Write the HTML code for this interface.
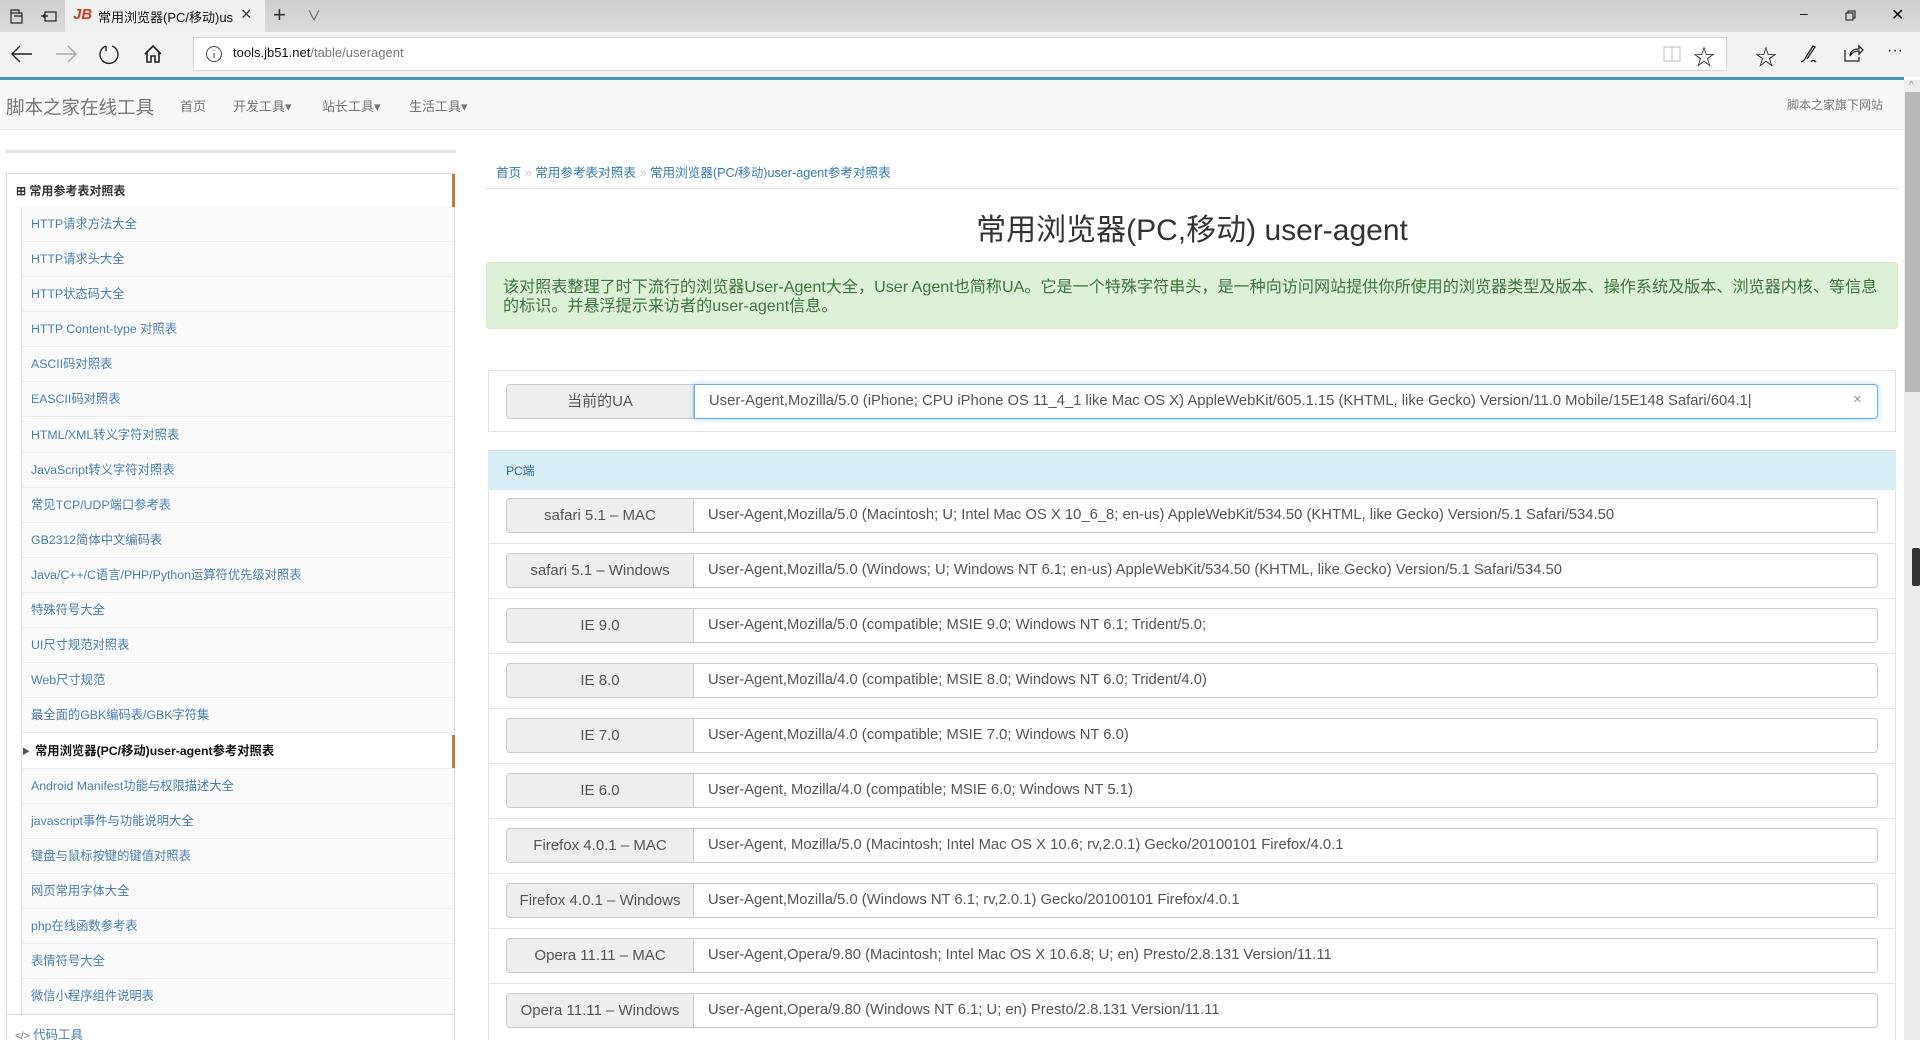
<!DOCTYPE html>
<html><head><meta charset="utf-8">
<style>
*{box-sizing:border-box;margin:0;padding:0}
html,body{width:1920px;height:1040px;overflow:hidden}
body{background:#fff;font-family:"Liberation Sans","Noto Sans CJK SC",sans-serif;position:relative;color:#333}
.a{position:absolute}
.tabbar{left:0;top:0;width:1920px;height:32px;background:linear-gradient(#cfcfcf,#dadada)}
.tab{left:65px;top:0;width:200px;height:32px;background:#f0f0f0}
.addr{left:0;top:32px;width:1920px;height:45px;background:#f2f2f2}
.abox{left:193px;top:37px;width:1534px;height:34px;background:#fff;border:1px solid #d6d6d6}
.blue{left:0;top:77px;width:1904px;height:3px;background:#4a93ba}
.hdr{left:0;top:80px;width:1904px;height:50px;background:#f8f8f8;border-bottom:1px solid #e7e7e7}
.nav{font-size:13px;color:#777;top:96px}
.sb{left:1904px;top:80px;width:16px;height:960px;background:#ececec}
.side-item{position:absolute;left:22px;width:432px;height:35px;background:#fafafa;border-bottom:1px solid #efefef;font-size:12.3px;color:#4a7fb5;padding-left:9px;line-height:35px;white-space:nowrap}
.bc{font-size:12.6px;color:#337ab7;top:162px}
.row{position:absolute;left:506px;width:1372px;height:35px}
.lab{position:absolute;left:0;top:0;width:188px;height:35px;background:#eee;border:1px solid #ccc;border-radius:4px 0 0 4px;text-align:center;line-height:33px;font-size:15px;color:#555}
.val{position:absolute;left:188px;top:0;width:1184px;height:35px;background:#fff;border:1px solid #ccc;border-left:none;border-radius:0 4px 4px 0;line-height:33px;font-size:14.8px;color:#555;padding-left:14px;white-space:nowrap;overflow:hidden}
.sep{position:absolute;left:488px;width:1408px;height:1px;background:#e6e6e6}
</style></head><body>
<div class="a tabbar"></div>
<div class="a tab"></div>
<svg class="a" style="left:8px;top:7px" width="18" height="18" viewBox="0 0 18 18" fill="none" stroke="#222" stroke-width="1.2"><rect x="3" y="6" width="11" height="10"/><path d="M3 6V3h8v3M6 9h8"/></svg>
<svg class="a" style="left:40px;top:7px" width="18" height="18" viewBox="0 0 18 18" fill="none" stroke="#222" stroke-width="1.2"><rect x="5" y="5" width="11" height="9"/><path d="M1 9h7M5 7l-2 2 2 2"/></svg>
<div class="a" style="left:73px;top:6px;width:18px;height:18px;font:bold 15px 'Liberation Sans';color:#c8402a;font-style:italic">JB</div>
<div class="a" style="left:98px;top:7px;font-size:13px;color:#111;width:135px;overflow:hidden;white-space:nowrap">常用浏览器(PC/移动)user-agent</div>
<div class="a" style="left:241px;top:4px;font-size:18px;color:#333">×</div>
<div class="a" style="left:273px;top:2px;font-size:22px;color:#333">+</div>
<div class="a" style="left:307px;top:6px;font-size:14px;color:#555">∨</div>
<div class="a" style="left:1800px;top:5px;font-size:14px;color:#111">–</div>
<svg class="a" style="left:1845px;top:10px" width="11" height="11" viewBox="0 0 11 11" fill="none" stroke="#111"><rect x="1" y="3" width="7" height="7"/><path d="M3 3V1h7v7H8"/></svg>
<div class="a" style="left:1891px;top:5px;font-size:16px;color:#111">✕</div>
<div class="a addr"></div>
<svg class="a" style="left:10px;top:44px" width="24" height="20" viewBox="0 0 24 20" fill="none" stroke="#222" stroke-width="1.4"><path d="M2 10h20M10 2 2 10l8 8"/></svg>
<svg class="a" style="left:54px;top:44px" width="24" height="20" viewBox="0 0 24 20" fill="none" stroke="#aaa" stroke-width="1.4"><path d="M2 10h20M14 2l8 8-8 8"/></svg>
<svg class="a" style="left:98px;top:42px" width="24" height="24" viewBox="0 0 24 24" fill="none" stroke="#222" stroke-width="1.4"><path d="M8 4a9 9 0 1 0 6 0"/><path d="M8 4v5"/></svg>
<svg class="a" style="left:142px;top:43px" width="22" height="22" viewBox="0 0 22 22" fill="none" stroke="#222" stroke-width="1.6"><path d="M3 11 11 3l8 8M5 9v10h4v-6h4v6h4V9"/></svg>
<div class="a abox"></div>
<svg class="a" style="left:205px;top:45px" width="18" height="18" viewBox="0 0 18 18" fill="none" stroke="#444"><circle cx="9" cy="9" r="7.5"/><path d="M9 8v5M9 5v1"/></svg>
<div class="a" style="left:233px;top:45px;font-size:13px;color:#111">tools.jb51.net<span style="color:#777">/table/useragent</span></div>
<svg class="a" style="left:1663px;top:45px" width="18" height="18" viewBox="0 0 18 18" fill="none" stroke="#bbb"><rect x="1" y="2" width="16" height="14"/><path d="M9 2v14"/></svg>
<div class="a" style="left:1693px;top:40px;font-size:22px;color:#222">☆</div>
<div class="a" style="left:1755px;top:40px;font-size:22px;color:#222">☆</div>
<svg class="a" style="left:1799px;top:44px" width="20" height="20" viewBox="0 0 20 20" fill="none" stroke="#222" stroke-width="1.3"><path d="M2 18c3-1 4-3 5-5L14 2l2 1-8 12M12 18c1-2 3-2 5 0"/></svg>
<svg class="a" style="left:1843px;top:43px" width="22" height="20" viewBox="0 0 22 20" fill="none" stroke="#222" stroke-width="1.3"><path d="M2 7v11h14v-4M7 13c0-5 4-7 9-7V3l4 4-4 4V8c-4 0-7 1-9 5z"/></svg>
<div class="a" style="left:1887px;top:42px;font-size:16px;color:#222">···</div>
<div class="a blue"></div>
<div class="a hdr"></div>
<div class="a" style="left:6px;top:94px;font-size:18.5px;color:#777">脚本之家在线工具</div>
<div class="a nav" style="left:180px">首页</div>
<div class="a nav" style="left:233px">开发工具▾</div>
<div class="a nav" style="left:322px">站长工具▾</div>
<div class="a nav" style="left:409px">生活工具▾</div>
<div class="a nav" style="left:1787px;font-size:12px">脚本之家旗下网站</div>
<div class="a sb"></div>
<div class="a" style="left:1905px;top:92px;width:15px;height:300px;background:#b9b9b9"></div>
<div class="a" style="left:1909px;top:80px;font-size:10px;color:#999">^</div>
<div class="a" style="left:1912px;top:548px;width:8px;height:38px;background:#333;border-radius:2px"></div>

<!-- sidebar -->
<div class="a" style="left:6px;top:150px;width:450px;height:3px;background:#e5e5e5"></div>
<div class="a" style="left:6px;top:173px;width:449px;height:867px;border:1px solid #ddd;border-bottom:none;background:#fff"></div>
<div class="a" style="left:452px;top:174px;width:3px;height:33px;background:#c77a3a"></div>
<div class="a" style="left:16px;top:182px;font-size:12px;color:#333;font-weight:bold">⊞ 常用参考表对照表</div>
<div class="a" style="left:21px;top:207px;width:1px;height:807px;background:#ddd"></div>
<div class="side-item" style="top:207px">HTTP请求方法大全</div>
<div class="side-item" style="top:242px">HTTP请求头大全</div>
<div class="side-item" style="top:277px">HTTP状态码大全</div>
<div class="side-item" style="top:312px">HTTP Content-type 对照表</div>
<div class="side-item" style="top:347px">ASCII码对照表</div>
<div class="side-item" style="top:382px">EASCII码对照表</div>
<div class="side-item" style="top:418px">HTML/XML转义字符对照表</div>
<div class="side-item" style="top:453px">JavaScript转义字符对照表</div>
<div class="side-item" style="top:488px">常见TCP/UDP端口参考表</div>
<div class="side-item" style="top:523px">GB2312简体中文编码表</div>
<div class="side-item" style="top:558px">Java/C++/C语言/PHP/Python运算符优先级对照表</div>
<div class="side-item" style="top:593px">特殊符号大全</div>
<div class="side-item" style="top:628px">UI尺寸规范对照表</div>
<div class="side-item" style="top:663px">Web尺寸规范</div>
<div class="side-item" style="top:698px">最全面的GBK编码表/GBK字符集</div>
<div class="side-item" style="top:734px;background:#fff;color:#111;font-weight:bold;padding-left:13px">常用浏览器(PC/移动)user-agent参考对照表</div>
<div class="a" style="left:22px;top:746px;font-size:8px;color:#555">▶</div>
<div class="a" style="left:452px;top:735px;width:3px;height:33px;background:#c77a3a"></div>
<div class="side-item" style="top:769px">Android Manifest功能与权限描述大全</div>
<div class="side-item" style="top:804px">javascript事件与功能说明大全</div>
<div class="side-item" style="top:839px">键盘与鼠标按键的键值对照表</div>
<div class="side-item" style="top:874px">网页常用字体大全</div>
<div class="side-item" style="top:909px">php在线函数参考表</div>
<div class="side-item" style="top:944px">表情符号大全</div>
<div class="side-item" style="top:979px">微信小程序组件说明表</div>
<div class="a" style="left:7px;top:1014px;width:447px;height:1px;background:#ddd"></div>
<div class="a" style="left:15px;top:1024px;font-size:12.5px;color:#4a7fb5"><span style="font-size:10px;color:#777">&lt;/&gt;</span> 代码工具</div>

<!-- main -->
<div class="a bc" style="left:496px">首页 <span style="color:#ccc">»</span> 常用参考表对照表 <span style="color:#ccc">»</span> 常用浏览器(PC/移动)user-agent参考对照表</div>
<div class="a" style="left:486px;top:188px;width:1412px;height:1px;background:#e5e5e5"></div>
<div class="a" style="left:486px;top:205px;width:1412px;text-align:center;font-size:30px;color:#333">常用浏览器(PC,移动) user-agent</div>
<div class="a" style="left:486px;top:262px;width:1412px;height:67px;background:#dff0d8;border:1px solid #d6e9c6;border-radius:4px;color:#3c763d;font-size:16.1px;line-height:19px;padding:15px 0 0 16px;white-space:nowrap">该对照表整理了时下流行的浏览器User-Agent大全，User Agent也简称UA。它是一个特殊字符串头，是一种向访问网站提供你所使用的浏览器类型及版本、操作系统及版本、浏览器内核、等信息<br>的标识。并悬浮提示来访者的user-agent信息。</div>

<div class="a" style="left:488px;top:370px;width:1408px;height:62px;border:1px solid #e3e3e3"></div>
<div class="row" style="top:384px"><div class="lab">当前的UA</div><div class="val" style="border:1px solid #66afe9;box-shadow:0 0 6px rgba(102,175,233,.5)">User-Agent,Mozilla/5.0 (iPhone; CPU iPhone OS 11_4_1 like Mac OS X) AppleWebKit/605.1.15 (KHTML, like Gecko) Version/11.0 Mobile/15E148 Safari/604.1|</div><div class="a" style="left:1347px;top:7px;font-size:15px;color:#999">×</div></div>

<div class="a" style="left:488px;top:450px;width:1408px;height:40px;background:#d9edf7;border-top:1px solid #cfe3ee"></div>
<div class="a" style="left:506px;top:462px;font-size:12px;color:#31708f">PC端</div>
<div class="a" style="left:488px;top:490px;width:1px;height:550px;background:#e6e6e6"></div>
<div class="a" style="left:1895px;top:490px;width:1px;height:550px;background:#e6e6e6"></div>

<div class="row" style="top:498px"><div class="lab">safari 5.1 – MAC</div><div class="val">User-Agent,Mozilla/5.0 (Macintosh; U; Intel Mac OS X 10_6_8; en-us) AppleWebKit/534.50 (KHTML, like Gecko) Version/5.1 Safari/534.50</div></div>
<div class="sep" style="top:543px"></div>
<div class="row" style="top:553px"><div class="lab">safari 5.1 – Windows</div><div class="val">User-Agent,Mozilla/5.0 (Windows; U; Windows NT 6.1; en-us) AppleWebKit/534.50 (KHTML, like Gecko) Version/5.1 Safari/534.50</div></div>
<div class="sep" style="top:598px"></div>
<div class="row" style="top:608px"><div class="lab">IE 9.0</div><div class="val">User-Agent,Mozilla/5.0 (compatible; MSIE 9.0; Windows NT 6.1; Trident/5.0;</div></div>
<div class="sep" style="top:653px"></div>
<div class="row" style="top:663px"><div class="lab">IE 8.0</div><div class="val">User-Agent,Mozilla/4.0 (compatible; MSIE 8.0; Windows NT 6.0; Trident/4.0)</div></div>
<div class="sep" style="top:708px"></div>
<div class="row" style="top:718px"><div class="lab">IE 7.0</div><div class="val">User-Agent,Mozilla/4.0 (compatible; MSIE 7.0; Windows NT 6.0)</div></div>
<div class="sep" style="top:763px"></div>
<div class="row" style="top:773px"><div class="lab">IE 6.0</div><div class="val">User-Agent, Mozilla/4.0 (compatible; MSIE 6.0; Windows NT 5.1)</div></div>
<div class="sep" style="top:818px"></div>
<div class="row" style="top:828px"><div class="lab">Firefox 4.0.1 – MAC</div><div class="val">User-Agent, Mozilla/5.0 (Macintosh; Intel Mac OS X 10.6; rv,2.0.1) Gecko/20100101 Firefox/4.0.1</div></div>
<div class="sep" style="top:873px"></div>
<div class="row" style="top:883px"><div class="lab">Firefox 4.0.1 – Windows</div><div class="val">User-Agent,Mozilla/5.0 (Windows NT 6.1; rv,2.0.1) Gecko/20100101 Firefox/4.0.1</div></div>
<div class="sep" style="top:928px"></div>
<div class="row" style="top:938px"><div class="lab">Opera 11.11 – MAC</div><div class="val">User-Agent,Opera/9.80 (Macintosh; Intel Mac OS X 10.6.8; U; en) Presto/2.8.131 Version/11.11</div></div>
<div class="sep" style="top:983px"></div>
<div class="row" style="top:993px"><div class="lab">Opera 11.11 – Windows</div><div class="val">User-Agent,Opera/9.80 (Windows NT 6.1; U; en) Presto/2.8.131 Version/11.11</div></div>
</body></html>
